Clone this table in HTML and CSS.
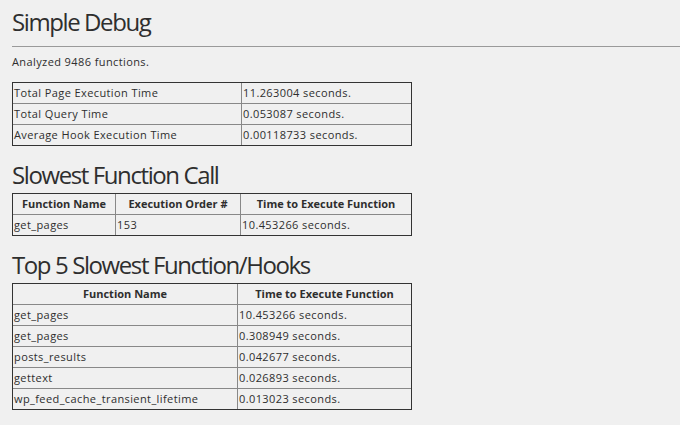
FILE: index.html
```html
<!DOCTYPE html>
<html>
<head>
<meta charset="utf-8">
<link rel="stylesheet" href="styles.css">
</head>
<body>
<div class="wrap">
  <h1 class="title">Simple Debug</h1>
  <hr class="rule">
  <p class="summary">Analyzed 9486 functions.</p>
  <table class="grid">
    <colgroup><col class="k229"><col></colgroup>
    <tr><td>Total Page Execution Time</td><td>11.263004 seconds.</td></tr>
    <tr><td>Total Query Time</td><td>0.053087 seconds.</td></tr>
    <tr><td>Average Hook Execution Time</td><td>0.00118733 seconds.</td></tr>
  </table>
  <h2 class="sub">Slowest Function Call</h2>
  <table class="grid">
    <colgroup><col class="k103"><col class="k125"><col></colgroup>
    <tr><th>Function Name</th><th>Execution Order #</th><th>Time to Execute Function</th></tr>
    <tr><td>get_pages</td><td>153</td><td>10.453266 seconds.</td></tr>
  </table>
  <h2 class="sub sub-b">Top 5 Slowest Function/Hooks</h2>
  <table class="grid">
    <colgroup><col class="k225"><col></colgroup>
    <tr><th>Function Name</th><th>Time to Execute Function</th></tr>
    <tr><td>get_pages</td><td>10.453266 seconds.</td></tr>
    <tr><td>get_pages</td><td>0.308949 seconds.</td></tr>
    <tr><td>posts_results</td><td>0.042677 seconds.</td></tr>
    <tr><td>gettext</td><td>0.026893 seconds.</td></tr>
    <tr><td>wp_feed_cache_transient_lifetime</td><td>0.013023 seconds.</td></tr>
  </table>
</div>
</body>
</html>
```
FILE: styles.css
```css
html, body {
  margin: 0;
  padding: 0;
  background: #f0f0f0;
}
body {
  font-family: "Open Sans", "DejaVu Sans", sans-serif;
  color: #2e2e2e;
  font-size: 11px;
}
.wrap {
  padding: 5px 0 0 12px;
}
.title {
  font-size: 24px;
  font-weight: 400;
  letter-spacing: -1.4px;
  margin: 0;
  line-height: 33px;
}
.rule {
  border: 0;
  border-top: 1px solid #9a9a9a;
  margin: 8px 0 0 0;
  height: 0;
}
.summary {
  margin: 7px 0 0 0;
  line-height: 16px;
  letter-spacing: 0.4px;
}
.grid {
  width: 400px;
  table-layout: fixed;
  border-collapse: separate;
  border-spacing: 0;
  border: 1px solid #333;
  margin-top: 12px;
}
.grid td, .grid th {
  box-sizing: border-box;
  border: 0;
  border-right: 1px solid #888;
  border-bottom: 1px solid #888;
  padding: 0 1px;
  height: 21px;
  line-height: 20px;
  text-align: left;
  font-size: 11px;
  letter-spacing: 0.4px;
  white-space: nowrap;
  overflow: hidden;
}
.grid td:last-child, .grid th:last-child { border-right: 0; }
.grid tr:last-child td { border-bottom: 0; height: 20px; }
.grid th {
  font-weight: 700;
  text-align: center;
  letter-spacing: 0;
}
.k229 { width: 229px; }
.k103 { width: 103px; }
.k125 { width: 125px; }
.k225 { width: 225px; }
.sub {
  font-size: 24px;
  font-weight: 400;
  letter-spacing: -1.4px;
  margin: 14px 0 0 0;
  line-height: 30px;
}
.sub-b { margin-top: 14px; }
.sub + .grid { margin-top: 3px; }
```
